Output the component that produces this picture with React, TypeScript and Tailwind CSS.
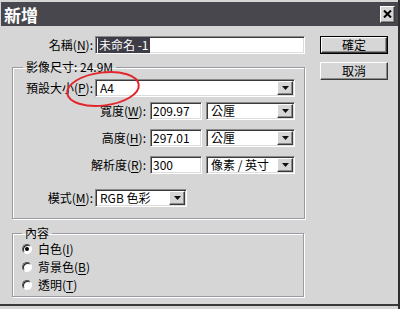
import React from "react";

const sunken =
  "bg-white border-t border-l border-t-[#8a8a8a] border-l-[#8a8a8a] border-b border-r border-b-white border-r-white shadow-[inset_1px_1px_0_#3a3a3a,inset_-1px_-1px_0_#dcdcdc]";
const raised =
  "bg-[#d6d6d6] border-t border-l border-t-white border-l-white border-b border-r border-b-[#3a3a3a] border-r-[#3a3a3a] shadow-[inset_-1px_-1px_0_#8a8a8a]";

function Arrow() {
  return (
    <div className={`${raised} w-[16px] h-full flex items-center justify-center`}>
      <svg width="7" height="4" viewBox="0 0 7 4">
        <polygon points="0,0 7,0 3.5,4" fill="#111" />
      </svg>
    </div>
  );
}

function Select({ w, text }: { w: string; text: string }) {
  return (
    <div className={`${sunken} ${w} h-[18px] flex items-stretch`}>
      <div className="flex-1 pl-[4px] flex items-center text-[12px] leading-none text-black">{text}</div>
      <div className="p-[1px] h-full">
        <Arrow />
      </div>
    </div>
  );
}

function Input({ w, children }: { w: string; children?: React.ReactNode }) {
  return (
    <div className={`${sunken} ${w} h-[18px] flex items-center pl-[2px] text-[12px] leading-none text-black`}>
      {children}
    </div>
  );
}

function U({ c }: { c: string }) {
  return <span className="underline underline-offset-2">{c}</span>;
}

function Radio({ checked, label }: { checked?: boolean; label: React.ReactNode }) {
  return (
    <div className="flex items-center h-[18px]">
      <div className="w-[10px] h-[10px] rounded-full bg-white border border-t-[#555] border-l-[#555] border-b-white border-r-white shadow-[inset_1px_1px_0_#222] flex items-center justify-center">
        {checked && <div className="w-[4px] h-[4px] rounded-full bg-black" />}
      </div>
      <span className="ml-[6px] text-[12px] leading-none">{label}</span>
    </div>
  );
}

export default function App() {
  return (
    <div className="w-[400px] h-[309px] bg-[#d6d6d6] relative overflow-hidden font-['Noto_Sans_CJK_TC','Liberation_Sans',sans-serif] text-black border-r-2 border-r-[#2f2f2f]">
      <div className="h-[306px] flex flex-col border-b-2 border-b-[#3a3a3a]">
        {/* title bar */}
        <div className="mt-[2px] ml-[1px] h-[24px] bg-[#48474d] flex items-center justify-between pl-[3px] pr-[3px]">
          <span className="text-white font-bold text-[17px] leading-none">新增</span>
          <div className={`${raised} w-[15px] h-[17px] flex items-center justify-center`}>
            <svg width="9" height="8" viewBox="0 0 9 8">
              <path d="M1 0.5 L8 7.5 M8 0.5 L1 7.5" stroke="#000" strokeWidth="2" />
            </svg>
          </div>
        </div>

        <div className="flex flex-row">
          {/* left column */}
          <div className="w-[306px] flex flex-col">
            <div className="mt-[10px] flex items-center h-[18px]">
              <div className="w-[95px] pr-[2px] text-right text-[12px] leading-none">
                名稱(<U c="N" />):
              </div>
              <Input w="w-[210px]">
                <span className="bg-[#3d3c47] text-white px-[1px] py-[2px]">未命名 -1</span>
              </Input>
            </div>

            <fieldset className="ml-[12px] mt-[5px] w-[293px] h-[160px] border border-[#9a9aa2] shadow-[1px_1px_0_#fff,inset_1px_1px_0_#fff] px-0">
              <legend className="ml-[10px] px-[3px] text-[12px] leading-[16px]">影像尺寸: 24.9M</legend>
              <div className="mt-[4px] flex items-center h-[18px]">
                <div className="w-[82px] pr-[2px] text-right text-[12px] leading-none">
                  預設大小(<U c="P" />):
                </div>
                <Select w="w-[200px]" text="A4" />
              </div>
              <div className="mt-[5px] flex items-center h-[18px]">
                <div className="w-[137px] pr-[4px] text-right text-[12px] leading-none">
                  寬度(<U c="W" />):
                </div>
                <Input w="w-[52px]">209.97</Input>
                <div className="w-[4px]" />
                <Select w="w-[89px]" text="公厘" />
              </div>
              <div className="mt-[9px] flex items-center h-[18px]">
                <div className="w-[137px] pr-[4px] text-right text-[12px] leading-none">
                  高度(<U c="H" />):
                </div>
                <Input w="w-[52px]">297.01</Input>
                <div className="w-[4px]" />
                <Select w="w-[89px]" text="公厘" />
              </div>
              <div className="mt-[9px] flex items-center h-[18px]">
                <div className="w-[137px] pr-[4px] text-right text-[12px] leading-none">
                  解析度(<U c="R" />):
                </div>
                <Input w="w-[52px]">300</Input>
                <div className="w-[4px]" />
                <Select w="w-[89px]" text="像素 / 英寸" />
              </div>
              <div className="mt-[15px] flex items-center h-[18px]">
                <div className="w-[82px] pr-[2px] text-right text-[12px] leading-none">
                  模式(<U c="M" />):
                </div>
                <Select w="w-[92px]" text="RGB 色彩" />
              </div>
            </fieldset>

            <fieldset className="ml-[12px] mt-[6px] w-[292px] h-[72px] border border-[#9a9aa2] shadow-[1px_1px_0_#fff,inset_1px_1px_0_#fff] px-0">
              <legend className="ml-[9px] px-[3px] text-[12px] leading-[16px]">內容</legend>
              <div className="ml-[9px] -mt-[1px] flex flex-col">
                <Radio checked label={<>白色(<U c="I" />)</>} />
                <Radio label={<>背景色(<U c="B" />)</>} />
                <Radio label={<>透明(<U c="T" />)</>} />
              </div>
            </fieldset>
          </div>

          {/* right column */}
          <div className="ml-[14px] mt-[10px] flex flex-col gap-[8px]">
            <div className="w-[68px] h-[18px] border border-black">
              <div className={`${raised} w-full h-full flex items-center justify-center text-[12px] leading-none`}>確定</div>
            </div>
            <div className={`${raised} w-[68px] h-[18px] flex items-center justify-center text-[12px] leading-none`}>取消</div>
          </div>
        </div>
      </div>

      {/* red annotation ellipse */}
      <svg className="absolute left-0 top-0 pointer-events-none" width="400" height="309">
        <ellipse cx="103" cy="89" rx="36" ry="16.5" fill="none" stroke="#e3262b" strokeWidth="2" transform="rotate(-7 103 89)" />
      </svg>
    </div>
  );
}
